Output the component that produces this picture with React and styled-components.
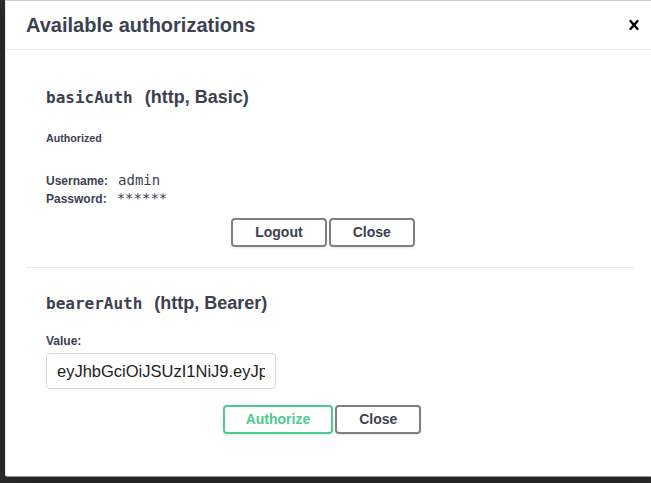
import React from "react";
import styled, { createGlobalStyle } from "styled-components";

const Global = createGlobalStyle`
  html, body { margin: 0; padding: 0; height: 100%; overflow: hidden; }
  body { background: #2b2b2b; font-family: "Liberation Sans", Arial, sans-serif; }
  #root { height: 100%; }
`;

const Backdrop = styled.div`
  height: 100%;
  padding-left: 5px;
  box-sizing: border-box;
  display: flex;
  align-items: flex-start;
`;

const Modal = styled.div`
  flex: 0 0 650px;
  width: 650px;
  box-sizing: border-box;
  background: #fff;
  border: 1px solid #ebebeb;
  border-top-color: #cdcdcd;
  border-bottom-color: #9a9a9a;
  border-radius: 0 0 3px 3px;
  box-shadow: 0 10px 30px 0 rgba(0, 0, 0, 0.2);
`;

const Header = styled.div`
  display: flex;
  align-items: center;
  justify-content: space-between;
  padding: 12px 10px 12px 20px;
  border-bottom: 1px solid #ebebeb;
`;

const Title = styled.h3`
  margin: 0;
  font-size: 20px;
  line-height: 24px;
  font-weight: 700;
  color: #3b4151;
`;

const CloseX = styled.button`
  border: none;
  background: none;
  padding: 0;
  width: 20px;
  height: 20px;
  display: flex;
  cursor: pointer;
`;

const Body = styled.div`
  padding: 20px 20px 22px;
`;

const Section = styled.div`
  padding: 10px 20px;
  margin-bottom: ${(p) => (p.$last ? "0" : "10px")};
  border-bottom: ${(p) => (p.$last ? "none" : "1px solid #ebebeb")};
`;

const H4 = styled.h4`
  margin: ${(p) => p.$mt}px 0 0;
  display: flex;
  align-items: baseline;
  font-size: 18px;
  line-height: 22px;
  font-weight: 700;
  color: #3b4151;
`;

const H4Code = styled.code`
  font-family: "DejaVu Sans Mono", monospace;
  font-size: 16px;
  font-weight: 700;
  margin-right: 12px;
`;

const H6 = styled.h6`
  margin: 22px 0 0;
  font-size: 10.7px;
  line-height: 14px;
  font-weight: 700;
  color: #3b4151;
`;

const Creds = styled.div`
  margin-top: 26px;
`;

const CredRow = styled.div`
  display: flex;
  align-items: baseline;
  height: 18px;
  line-height: 18px;
`;

const Label = styled.label`
  display: block;
  font-size: 12px;
  line-height: 14px;
  font-weight: 700;
  color: #3b4151;
  margin-top: ${(p) => p.$mt || 0}px;
`;

const Value = styled.code`
  font-family: "DejaVu Sans Mono", monospace;
  font-size: 14px;
  color: #3b4151;
  margin-left: 10px;
`;

const BtnRow = styled.div`
  display: flex;
  justify-content: center;
  gap: 2px;
  padding: ${(p) => p.$top}px ${(p) => p.$shift}px 10px 0;
`;

const Btn = styled.button`
  box-sizing: border-box;
  height: 29px;
  padding: 5px ${(p) => (p.$authorize ? 21 : 22)}px;
  border: 2px solid ${(p) => (p.$authorize ? "#49cc90" : "#808080")};
  border-radius: 4px;
  background: transparent;
  box-shadow: 0 1px 2px rgba(0, 0, 0, 0.1);
  color: ${(p) => (p.$authorize ? "#49cc90" : "#3b4151")};
  font-family: "Liberation Sans", Arial, sans-serif;
  font-size: 14px;
  line-height: 15px;
  font-weight: 700;
  cursor: pointer;
`;

const Input = styled.input`
  display: block;
  box-sizing: border-box;
  width: 230px;
  height: 36px;
  margin: 5px 0 7px;
  padding: 8px 10px;
  border: 1px solid #d9d9d9;
  border-radius: 4px;
  background: #fff;
  font-family: "Liberation Sans", Arial, sans-serif;
  font-size: 16.5px;
  color: #222;
  outline: none;
`;

export default function App() {
  return (
    <>
      <Global />
      <Backdrop>
        <Modal>
          <Header>
            <Title>Available authorizations</Title>
            <CloseX aria-label="Close">
              <svg width="20" height="20" viewBox="0 0 20 20">
                <path
                  fill="#000"
                  d="M14.348 14.849c-.469.469-1.229.469-1.697 0L10 11.819l-2.651 3.029c-.469.469-1.229.469-1.697 0-.469-.469-.469-1.229 0-1.697l2.758-3.15-2.759-3.152c-.469-.469-.469-1.228 0-1.697.469-.469 1.228-.469 1.697 0L10 8.183l2.651-3.031c.469-.469 1.228-.469 1.697 0 .469.469.469 1.229 0 1.697l-2.758 3.152 2.758 3.15c.469.469.469 1.229 0 1.698z"
                />
              </svg>
            </CloseX>
          </Header>
          <Body>
            <Section>
              <H4 $mt={6}>
                <H4Code>basicAuth</H4Code>(http, Basic)
              </H4>
              <H6>Authorized</H6>
              <Creds>
                <CredRow>
                  <Label>Username:</Label>
                  <Value>admin</Value>
                </CredRow>
                <CredRow>
                  <Label>Password:</Label>
                  <Value>******</Value>
                </CredRow>
              </Creds>
              <BtnRow $shift={14} $top={11}>
                <Btn>Logout</Btn>
                <Btn>Close</Btn>
              </BtnRow>
            </Section>
            <Section $last>
              <H4 $mt={4}>
                <H4Code>bearerAuth</H4Code>(http, Bearer)
              </H4>
              <Label $mt={19}>Value:</Label>
              <Input
                type="text"
                readOnly
                value="eyJhbGciOiJSUzI1NiJ9.eyJpc3MiOiJodHRwczovL2F1dGguZXhhbXBsZS5jb20ifQ"
              />
              <BtnRow $shift={16} $top={9}>
                <Btn $authorize>Authorize</Btn>
                <Btn>Close</Btn>
              </BtnRow>
            </Section>
          </Body>
        </Modal>
      </Backdrop>
    </>
  );
}
